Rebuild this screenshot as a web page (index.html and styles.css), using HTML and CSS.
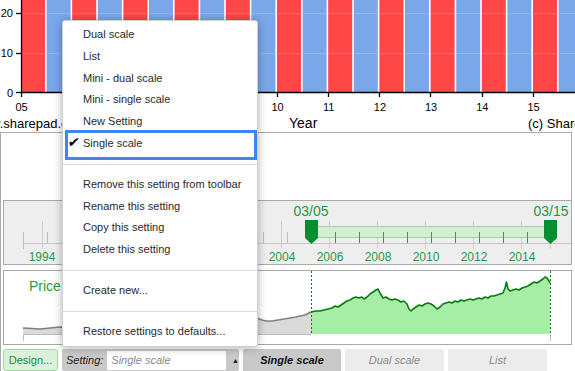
FILE: index.html
```html
<!DOCTYPE html>
<html>
<head>
<meta charset="utf-8">
<link rel="stylesheet" href="styles.css">
</head>
<body>
<div class="chart">
  <svg width="575" height="132" viewBox="0 0 575 132">
    <g class="bars">
      <rect class="red" x="21" y="0" width="24" height="92"/>
      <rect class="blue" x="46.6" y="0" width="24" height="92"/>
      <rect class="red" x="72.2" y="0" width="24" height="92"/>
      <rect class="blue" x="97.8" y="0" width="24" height="92"/>
      <rect class="red" x="123.4" y="0" width="24" height="92"/>
      <rect class="blue" x="149" y="0" width="24" height="92"/>
      <rect class="red" x="174.6" y="0" width="24" height="92"/>
      <rect class="blue" x="200.2" y="0" width="24" height="92"/>
      <rect class="red" x="225.8" y="0" width="24" height="92"/>
      <rect class="blue" x="251.4" y="0" width="24" height="92"/>
      <rect class="red" x="277" y="0" width="24" height="92"/>
      <rect class="blue" x="302.6" y="0" width="24" height="92"/>
      <rect class="red" x="328.2" y="0" width="24" height="92"/>
      <rect class="blue" x="353.8" y="0" width="24" height="92"/>
      <rect class="red" x="379.4" y="0" width="24" height="92"/>
      <rect class="blue" x="405" y="0" width="24" height="92"/>
      <rect class="red" x="430.6" y="0" width="24" height="92"/>
      <rect class="blue" x="456.2" y="0" width="24" height="92"/>
      <rect class="red" x="481.8" y="0" width="24" height="92"/>
      <rect class="blue" x="507.4" y="0" width="24" height="92"/>
      <rect class="red" x="533" y="0" width="24" height="92"/>
      <rect class="blue" x="558.6" y="0" width="24" height="92"/>
    </g>
    <g class="grid">
      <line x1="21" y1="13.5" x2="575" y2="13.5"/>
      <line x1="21" y1="53.5" x2="575" y2="53.5"/>
    </g>
    <g class="axis">
      <line x1="21.5" y1="0" x2="21.5" y2="92.5"/>
      <line x1="21" y1="92.5" x2="575" y2="92.5"/>
      <line x1="16" y1="13.5" x2="21" y2="13.5"/>
      <line x1="16" y1="53.5" x2="21" y2="53.5"/>
      <line x1="16" y1="92.5" x2="21" y2="92.5"/>
      <line x1="21.5" y1="92" x2="21.5" y2="97"/>
      <line x1="72.5" y1="92" x2="72.5" y2="97"/>
      <line x1="123.5" y1="92" x2="123.5" y2="97"/>
      <line x1="174.5" y1="92" x2="174.5" y2="97"/>
      <line x1="226.5" y1="92" x2="226.5" y2="97"/>
      <line x1="277.5" y1="92" x2="277.5" y2="97"/>
      <line x1="328.5" y1="92" x2="328.5" y2="97"/>
      <line x1="379.5" y1="92" x2="379.5" y2="97"/>
      <line x1="430.5" y1="92" x2="430.5" y2="97"/>
      <line x1="482.5" y1="92" x2="482.5" y2="97"/>
      <line x1="533.5" y1="92" x2="533.5" y2="97"/>
    </g>
    <g class="ylab">
      <text x="13" y="17">20</text>
      <text x="13" y="57">10</text>
      <text x="13" y="96.5">0</text>
    </g>
    <g class="xlab">
      <text x="21.5" y="111">05</text>
      <text x="277.5" y="111">10</text>
      <text x="328.7" y="111">11</text>
      <text x="379.9" y="111">12</text>
      <text x="431.1" y="111">13</text>
      <text x="482.3" y="111">14</text>
      <text x="533.5" y="111">15</text>
    </g>
    <text class="site" x="-9" y="128">w.sharepad.co.uk</text>
    <text class="year" x="289" y="128">Year</text>
    <text class="site" x="528" y="128">(c) Sharepad</text>
  </svg>
</div>

<div class="main">
  <div class="spacer"></div>

  <div class="panel slider">
    <svg width="567" height="63" viewBox="4 201 567 63">
      <line class="base" x1="23" y1="243.5" x2="571" y2="243.5"/>
      <g class="major">
        <line x1="42.5" y1="221" x2="42.5" y2="249"/>
        <line x1="90.5" y1="221" x2="90.5" y2="249"/>
        <line x1="138.5" y1="221" x2="138.5" y2="249"/>
        <line x1="186.5" y1="221" x2="186.5" y2="249"/>
        <line x1="234.5" y1="221" x2="234.5" y2="249"/>
        <line x1="281.5" y1="221" x2="281.5" y2="249"/>
        <line x1="329.5" y1="221" x2="329.5" y2="249"/>
        <line x1="377.5" y1="221" x2="377.5" y2="249"/>
        <line x1="425.5" y1="221" x2="425.5" y2="249"/>
        <line x1="473.5" y1="221" x2="473.5" y2="249"/>
        <line x1="521.5" y1="221" x2="521.5" y2="249"/>
      </g>
      <g class="minor">
        <line x1="23.5" y1="232" x2="23.5" y2="249"/>
        <line x1="47.5" y1="232" x2="47.5" y2="243"/>
        <line x1="71.5" y1="232" x2="71.5" y2="243"/>
        <line x1="95.5" y1="232" x2="95.5" y2="243"/>
        <line x1="119.5" y1="232" x2="119.5" y2="243"/>
        <line x1="143.5" y1="232" x2="143.5" y2="243"/>
        <line x1="167.5" y1="232" x2="167.5" y2="243"/>
        <line x1="191.5" y1="232" x2="191.5" y2="243"/>
        <line x1="215.5" y1="232" x2="215.5" y2="243"/>
        <line x1="239.5" y1="232" x2="239.5" y2="243"/>
        <line x1="263.5" y1="232" x2="263.5" y2="243"/>
        <line x1="287.5" y1="232" x2="287.5" y2="243"/>
      </g>
      <rect class="band" x="311.5" y="226.5" width="239" height="11"/>
      <g class="bandtick">
        <line x1="335.5" y1="232" x2="335.5" y2="243"/>
        <line x1="359.5" y1="232" x2="359.5" y2="243"/>
        <line x1="383.5" y1="232" x2="383.5" y2="243"/>
        <line x1="407.5" y1="232" x2="407.5" y2="243"/>
        <line x1="431.5" y1="232" x2="431.5" y2="243"/>
        <line x1="455.5" y1="232" x2="455.5" y2="243"/>
        <line x1="479.5" y1="232" x2="479.5" y2="243"/>
        <line x1="503.5" y1="232" x2="503.5" y2="243"/>
        <line x1="527.5" y1="232" x2="527.5" y2="243"/>
      </g>
      <line class="major" x1="550.5" y1="240" x2="550.5" y2="249"/>
      <path class="handle" d="M305,220 H318 V238 L311.5,244 L305,238 Z"/>
      <path class="handle" d="M544,220 H557 V238 L550.5,244 L544,238 Z"/>
      <text class="hlab" x="311" y="216">03/05</text>
      <text class="hlab" x="551" y="216">03/15</text>
      <g class="years">
        <text x="42" y="260.5">1994</text>
        <text x="282" y="260.5">2004</text>
        <text x="330" y="260.5">2006</text>
        <text x="378" y="260.5">2008</text>
        <text x="426" y="260.5">2010</text>
        <text x="474" y="260.5">2012</text>
        <text x="522" y="260.5">2014</text>
      </g>
    </svg>
  </div>

  <div class="panel price">
    <svg width="567" height="73" viewBox="4 271 567 73">
      <text class="ptitle" x="29" y="291">Price</text>
      <path class="frame" d="M23.5,341 V334.5 H311"/>
      <path class="gfill" d="M23,334 L23,328 L40,329 L60,327 L80,328 L100,326 L120,327 L140,325 L160,326 L180,324 L200,325 L220,323 L240,322 L250,320 L257,318 L262,320 L266,321 L272,321 L278,320 L284,319 L290,318 L296,317 L300,316 L305,315 L309,313 L311,312 L311,334 Z"/>
      <path class="gline" d="M23,328 L40,329 L60,327 L80,328 L100,326 L120,327 L140,325 L160,326 L180,324 L200,325 L220,323 L240,322 L250,320 L257,318 L262,320 L266,321 L272,321 L278,320 L284,319 L290,318 L296,317 L300,316 L305,315 L309,313 L311,312"/>
      <path class="pfill" d="M311,334 L311,312 L316,311 L320,311 L324,310 L328,309 L332,308 L335,306 L338,307 L341,305 L344,303 L347,301 L350,300 L353,298 L356,297 L359,298 L362,297 L364,299 L367,297 L370,294 L373,292 L376,290 L378,289 L380,293 L383,298 L386,297 L389,299 L392,300 L395,299 L398,300 L401,302 L404,301 L407,304 L409,309 L411,311 L413,309 L416,307 L419,305 L422,306 L425,304 L428,303 L431,304 L434,306 L437,309 L440,307 L443,304 L446,303 L449,302 L452,303 L455,301 L458,302 L461,300 L464,301 L467,300 L470,299 L473,300 L476,299 L479,298 L482,299 L485,297 L488,298 L491,296 L494,296 L497,295 L500,294 L503,293 L505,288 L506.5,282 L508,289 L510,291 L513,290 L516,289 L519,290 L522,288 L525,287 L528,286 L531,284 L534,282 L537,283 L540,281 L543,279 L545,277 L547,278 L549,281 L550,283 L550,334 Z"/>
      <path class="pline" d="M311,312 L316,311 L320,311 L324,310 L328,309 L332,308 L335,306 L338,307 L341,305 L344,303 L347,301 L350,300 L353,298 L356,297 L359,298 L362,297 L364,299 L367,297 L370,294 L373,292 L376,290 L378,289 L380,293 L383,298 L386,297 L389,299 L392,300 L395,299 L398,300 L401,302 L404,301 L407,304 L409,309 L411,311 L413,309 L416,307 L419,305 L422,306 L425,304 L428,303 L431,304 L434,306 L437,309 L440,307 L443,304 L446,303 L449,302 L452,303 L455,301 L458,302 L461,300 L464,301 L467,300 L470,299 L473,300 L476,299 L479,298 L482,299 L485,297 L488,298 L491,296 L494,296 L497,295 L500,294 L503,293 L505,288 L506.5,282 L508,289 L510,291 L513,290 L516,289 L519,290 L522,288 L525,287 L528,286 L531,284 L534,282 L537,283 L540,281 L543,279 L545,277 L547,278 L549,281 L550,283"/>
      <line class="dots" x1="311.5" y1="271" x2="311.5" y2="334"/>
      <line class="dots" x1="550.5" y1="271" x2="550.5" y2="334"/>
      <line class="endtick" x1="550.5" y1="334" x2="550.5" y2="341"/>
    </svg>
  </div>

  <div class="toolbar">
    <div class="design">Design...</div>
    <div class="setting">
      <span class="label">Setting:</span>
      <span class="input">Single scale</span>
      <span class="arrow">▲</span>
    </div>
    <div class="tab active">Single scale</div>
    <div class="tab wide">Dual scale</div>
    <div class="tab wide">List</div>
  </div>
</div>

<div class="menu">
  <div class="item">Dual scale</div>
  <div class="item">List</div>
  <div class="item">Mini - dual scale</div>
  <div class="item">Mini - single scale</div>
  <div class="item">New Setting</div>
  <div class="item selected"><span class="check">✔</span>Single scale</div>
  <div class="sep"></div>
  <div class="item">Remove this setting from toolbar</div>
  <div class="item">Rename this setting</div>
  <div class="item">Copy this setting</div>
  <div class="item">Delete this setting</div>
  <div class="sep"></div>
  <div class="item">Create new...</div>
  <div class="sep"></div>
  <div class="item">Restore settings to defaults...</div>
</div>
</body>
</html>
```

FILE: styles.css
```css
* { box-sizing: border-box; }
html, body { margin: 0; padding: 0; }
body {
  width: 575px;
  height: 371px;
  overflow: hidden;
  background: #fff;
  position: relative;
  font-family: "Liberation Sans", Arial, sans-serif;
}

/* top chart */
.chart { height: 132px; }
.chart svg { display: block; }
.bars .red { fill: #ff4747; }
.bars .blue { fill: #7aa7ea; }
.grid line { stroke: #ffffff; stroke-opacity: 0.18; stroke-width: 1; }
.axis line { stroke: #000; stroke-width: 1.3; }
.ylab text { font-family: "Liberation Sans", Arial, sans-serif; font-size: 11px; text-anchor: end; fill: #000; }
.xlab text { font-family: "Liberation Sans", Arial, sans-serif; font-size: 11px; text-anchor: middle; fill: #000; }
.site { font-family: "Liberation Sans", Arial, sans-serif; font-size: 13px; fill: #000; }
.year { font-family: "Liberation Sans", Arial, sans-serif; font-size: 14px; fill: #000; }

/* main area */
.main {
  width: 572px;
  height: 239px;
  border-top: 1px solid #aaa;
  border-left: 1px solid #aaa;
}
.spacer {
  width: 571px;
  height: 67px;
  border-right: 1px solid #aaa;
}
.panel {
  margin-left: 2px;
  width: 569px;
  border: 1px solid #aaa;
}
.panel svg { display: block; }
.slider { height: 65px; background: #eeeeee; }
.price { height: 75px; margin-top: 5px; background: #fff; }

.base { stroke: #c6c6c6; stroke-width: 1; }
.major line, line.major { stroke: #cfcfcf; stroke-width: 1; }
.minor line { stroke: #bdbdbd; stroke-width: 1; }
.band { fill: #d3efd3; stroke: #9fd29f; stroke-width: 1; }
.bandtick line { stroke: #3c9a4c; stroke-width: 1; }
.handle { fill: #068d30; }
.hlab { font-family: "Liberation Sans", Arial, sans-serif; font-size: 14px; fill: #1f9a3c; text-anchor: middle; }
.years text { font-family: "Liberation Sans", Arial, sans-serif; font-size: 12px; fill: #1f9a45; text-anchor: middle; }

.ptitle { font-family: "Liberation Sans", Arial, sans-serif; font-size: 14px; fill: #1f9e3a; }
.frame { fill: none; stroke: #bbb; stroke-width: 1; }
.gfill { fill: #dadada; }
.gline { fill: none; stroke: #808080; stroke-width: 1.5; }
.pfill { fill: #a6eea6; }
.pline { fill: none; stroke: #0b7a12; stroke-width: 1.6; stroke-linejoin: round; }
.dots { stroke: #0b7a12; stroke-width: 1; stroke-dasharray: 2 2; }
.endtick { stroke: #bbb; stroke-width: 1; }

/* toolbar */
.toolbar {
  display: flex;
  align-items: flex-start;
  gap: 4px;
  padding: 4px 0 0 2px;
  font-size: 11px;
}
.design {
  width: 55px;
  height: 22px;
  line-height: 20px;
  text-align: center;
  background: #dcf1dc;
  border: 1px solid #a3d6a3;
  border-radius: 3px;
  color: #1d8a3a;
}
.setting {
  width: 177px;
  height: 22px;
  background: #c9c9c9;
  border-radius: 2px;
  display: flex;
  align-items: flex-start;
  padding: 2px 0 0 4px;
  gap: 4px;
}
.setting .label {
  font-style: italic;
  color: #222;
  line-height: 19px;
}
.setting .input {
  width: 121px;
  height: 19px;
  line-height: 19px;
  background: #fff;
  padding-left: 4px;
  font-style: italic;
  color: #8a8a8a;
}
.setting .arrow {
  font-size: 7px;
  line-height: 19px;
  color: #111;
  padding-left: 2px;
}
.tab {
  width: 98px;
  height: 22px;
  line-height: 23px;
  text-align: center;
  font-style: italic;
  background: #ececec;
  color: #8a8a8a;
  border-radius: 2px 2px 0 0;
}
.tab.wide { width: 99px; }
.tab.active {
  background: #c9c9c9;
  color: #111;
  font-weight: bold;
}

/* dropdown menu */
.menu {
  position: absolute;
  left: 62px;
  top: 20px;
  width: 196px;
  background: #fff;
  border: 1px solid #d0d0d0;
  border-radius: 3px;
  box-shadow: 0 1px 8px rgba(0, 0, 0, 0.32);
  padding: 3px 0 3px;
  font-size: 11px;
  color: #2a2a2a;
}
.item {
  height: 21.8px;
  line-height: 21.8px;
  padding-left: 20px;
  white-space: nowrap;
}
.item.selected {
  position: relative;
  padding-left: 5px;
}
.item.selected::after {
  content: "";
  position: absolute;
  left: 2px;
  right: 0;
  top: -3px;
  bottom: -5px;
  border: 3px solid #3d86f3;
}
.check {
  display: inline-block;
  width: 15px;
  font-family: "DejaVu Sans", sans-serif;
  font-size: 14px;
  line-height: 14px;
  color: #000;
  transform: skewX(-8deg);
}
.sep {
  height: 1px;
  background: #dcdcdc;
  margin: 9px 0;
}
```
